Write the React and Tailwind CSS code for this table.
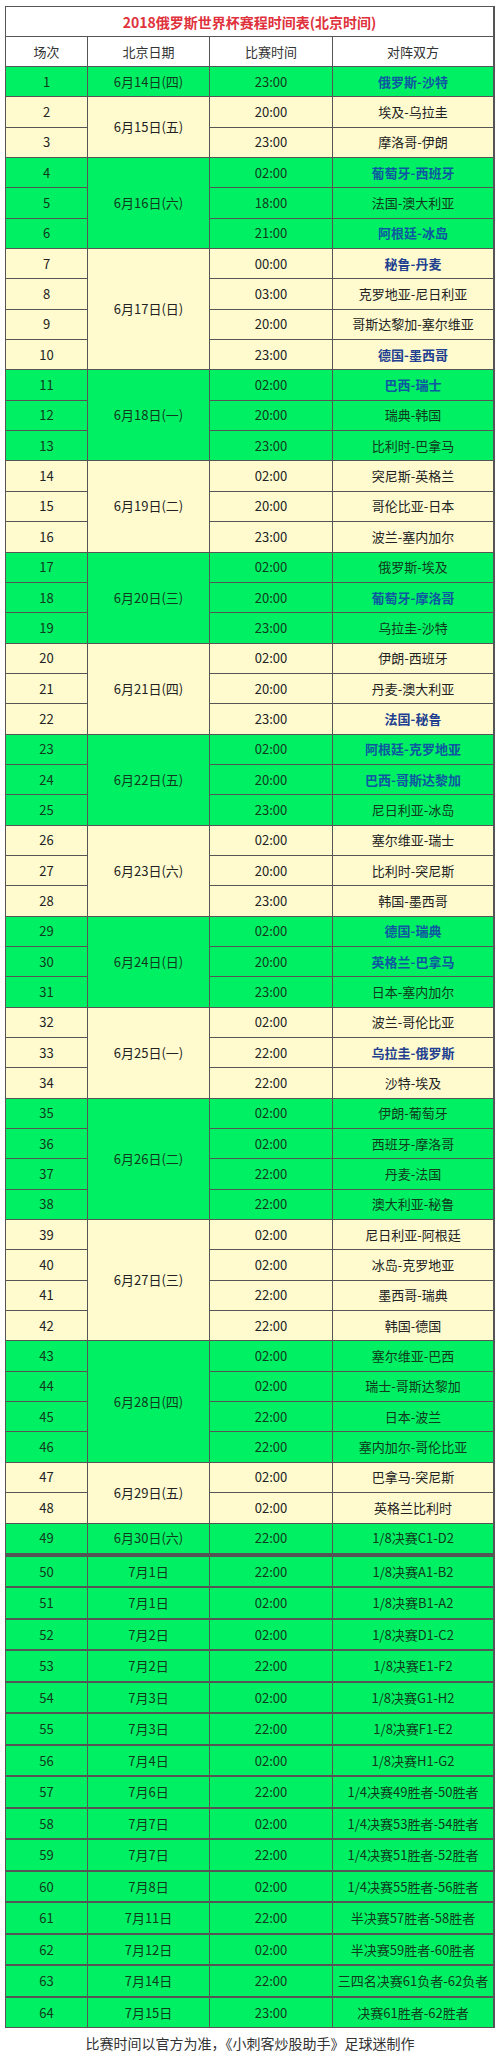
const groups = [
  { date: '6月14日(四)', green: true, games: [[1, '23:00', '俄罗斯-沙特', true]] },
  { date: '6月15日(五)', green: false, games: [[2, '20:00', '埃及-乌拉圭'], [3, '23:00', '摩洛哥-伊朗']] },
  { date: '6月16日(六)', green: true, games: [[4, '02:00', '葡萄牙-西班牙', true], [5, '18:00', '法国-澳大利亚'], [6, '21:00', '阿根廷-冰岛', true]] },
  { date: '6月17日(日)', green: false, games: [[7, '00:00', '秘鲁-丹麦', true], [8, '03:00', '克罗地亚-尼日利亚'], [9, '20:00', '哥斯达黎加-塞尔维亚'], [10, '23:00', '德国-墨西哥', true]] },
  { date: '6月18日(一)', green: true, games: [[11, '02:00', '巴西-瑞士', true], [12, '20:00', '瑞典-韩国'], [13, '23:00', '比利时-巴拿马']] },
  { date: '6月19日(二)', green: false, games: [[14, '02:00', '突尼斯-英格兰'], [15, '20:00', '哥伦比亚-日本'], [16, '23:00', '波兰-塞内加尔']] },
  { date: '6月20日(三)', green: true, games: [[17, '02:00', '俄罗斯-埃及'], [18, '20:00', '葡萄牙-摩洛哥', true], [19, '23:00', '乌拉圭-沙特']] },
  { date: '6月21日(四)', green: false, games: [[20, '02:00', '伊朗-西班牙'], [21, '20:00', '丹麦-澳大利亚'], [22, '23:00', '法国-秘鲁', true]] },
  { date: '6月22日(五)', green: true, games: [[23, '02:00', '阿根廷-克罗地亚', true], [24, '20:00', '巴西-哥斯达黎加', true], [25, '23:00', '尼日利亚-冰岛']] },
  { date: '6月23日(六)', green: false, games: [[26, '02:00', '塞尔维亚-瑞士'], [27, '20:00', '比利时-突尼斯'], [28, '23:00', '韩国-墨西哥']] },
  { date: '6月24日(日)', green: true, games: [[29, '02:00', '德国-瑞典', true], [30, '20:00', '英格兰-巴拿马', true], [31, '23:00', '日本-塞内加尔']] },
  { date: '6月25日(一)', green: false, games: [[32, '02:00', '波兰-哥伦比亚'], [33, '22:00', '乌拉圭-俄罗斯', true], [34, '22:00', '沙特-埃及']] },
  { date: '6月26日(二)', green: true, games: [[35, '02:00', '伊朗-葡萄牙'], [36, '02:00', '西班牙-摩洛哥'], [37, '22:00', '丹麦-法国'], [38, '22:00', '澳大利亚-秘鲁']] },
  { date: '6月27日(三)', green: false, games: [[39, '02:00', '尼日利亚-阿根廷'], [40, '02:00', '冰岛-克罗地亚'], [41, '22:00', '墨西哥-瑞典'], [42, '22:00', '韩国-德国']] },
  { date: '6月28日(四)', green: true, games: [[43, '02:00', '塞尔维亚-巴西'], [44, '02:00', '瑞士-哥斯达黎加'], [45, '22:00', '日本-波兰'], [46, '22:00', '塞内加尔-哥伦比亚']] },
  { date: '6月29日(五)', green: false, games: [[47, '02:00', '巴拿马-突尼斯'], [48, '02:00', '英格兰比利时']] },
  { date: '6月30日(六)', green: true, games: [[49, '22:00', '1/8决赛C1-D2']] },
];

const knockout = [
  [50, '7月1日', '22:00', '1/8决赛A1-B2'],
  [51, '7月1日', '02:00', '1/8决赛B1-A2'],
  [52, '7月2日', '02:00', '1/8决赛D1-C2'],
  [53, '7月2日', '22:00', '1/8决赛E1-F2'],
  [54, '7月3日', '02:00', '1/8决赛G1-H2'],
  [55, '7月3日', '22:00', '1/8决赛F1-E2'],
  [56, '7月4日', '02:00', '1/8决赛H1-G2'],
  [57, '7月6日', '22:00', '1/4决赛49胜者-50胜者'],
  [58, '7月7日', '02:00', '1/4决赛53胜者-54胜者'],
  [59, '7月7日', '22:00', '1/4决赛51胜者-52胜者'],
  [60, '7月8日', '02:00', '1/4决赛55胜者-56胜者'],
  [61, '7月11日', '22:00', '半决赛57胜者-58胜者'],
  [62, '7月12日', '02:00', '半决赛59胜者-60胜者'],
  [63, '7月14日', '22:00', '三四名决赛61负者-62负者'],
  [64, '7月15日', '23:00', '决赛61胜者-62胜者'],
];

const cell = 'flex items-center justify-center text-center whitespace-nowrap';

function tone(isGreen, bold) {
  if (bold) return isGreen ? 'bg-[#00f064] font-bold text-[#0d58a0]' : 'bg-[#fffbcf] font-bold text-[#223f90]';
  return isGreen ? 'bg-[#00f064] text-[#103a1c]' : 'bg-[#fffbcf] text-[#222]';
}

export default function App() {
  return (
    <div className="w-[500px] bg-white px-[5px] pt-[6px] font-['Noto_Sans_CJK_SC',sans-serif] text-[13px] leading-[18px] text-[#222]">
      {/* group stage, one grid so the date cells can span rows */}
      <div className="grid w-[490px] grid-cols-[81px_121px_122px_160px] grid-rows-[29px_29px_repeat(49,29.35px)] gap-px bg-[#555] p-px">
        <div className={`${cell} col-span-4 bg-white text-[14px] font-bold text-[#e0323c]`}>
          2018俄罗斯世界杯赛程时间表(北京时间)
        </div>
        <div className={`${cell} bg-white text-[#333]`}>场次</div>
        <div className={`${cell} bg-white text-[#333]`}>北京日期</div>
        <div className={`${cell} bg-white text-[#333]`}>比赛时间</div>
        <div className={`${cell} bg-white text-[#333]`}>对阵双方</div>
        {groups.map((g) =>
          g.games.map(([no, time, match, bold], i) => {
            const bg = tone(g.green, false);
            const span = ['', 'row-span-1', 'row-span-2', 'row-span-3', 'row-span-4'][g.games.length];
            return [
              <div key={`n${no}`} className={`${cell} ${bg}`}>{no}</div>,
              i === 0 && (
                <div key={`d${no}`} className={`${cell} ${span} ${bg}`}>
                  {g.date}
                </div>
              ),
              <div key={`t${no}`} className={`${cell} ${bg}`}>{time}</div>,
              <div key={`m${no}`} className={`${cell} ${tone(g.green, bold)}`}>
                {match}
              </div>,
            ];
          })
        )}
      </div>

      {/* knockout rows are separate little tables stacked */}
      <div className="h-[2px] w-[490px] bg-[#555]" />
      <div className="flex flex-col">
        {knockout.map(([no, date, time, match]) => (
          <div
            key={no}
            className="grid h-[31.5px] w-[490px] grid-cols-[81px_121px_122px_160px] gap-px bg-[#555] p-px"
          >
            <div className={`${cell} ${tone(true, false)}`}>{no}</div>
            <div className={`${cell} ${tone(true, false)}`}>{date}</div>
            <div className={`${cell} ${tone(true, false)}`}>{time}</div>
            <div className={`${cell} ${tone(true, false)}`}>{match}</div>
          </div>
        ))}
      </div>

      <p className="pt-[6px] text-center text-[14px] text-[#333]">
        比赛时间以官方为准，《小刺客炒股助手》足球迷制作
      </p>
    </div>
  );
}
